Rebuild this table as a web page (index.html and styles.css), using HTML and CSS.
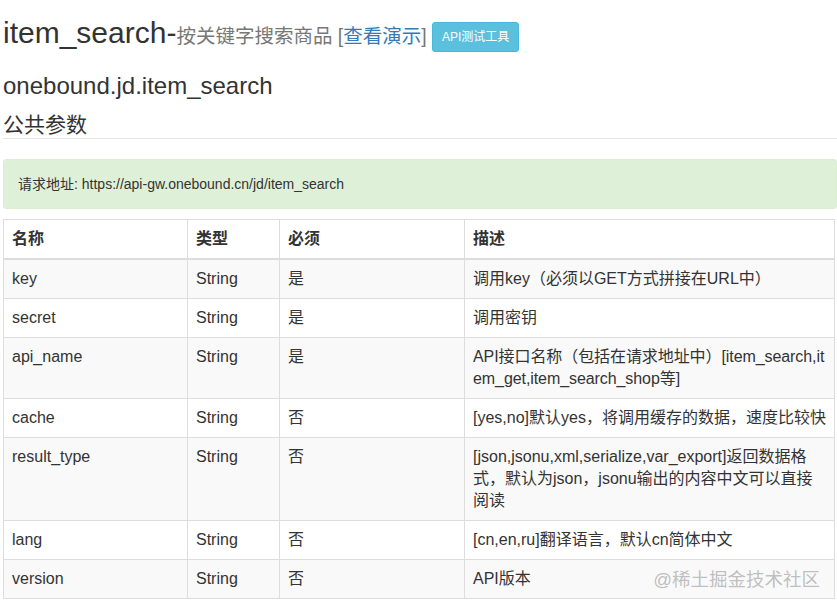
FILE: index.html
```html
<!DOCTYPE html>
<html lang="zh-CN">
<head>
<meta charset="utf-8">
<title>item_search</title>
<link rel="stylesheet" href="styles.css">
</head>
<body>
<div class="page">
  <h1 class="title">item_search-<small class="subtitle">按关键字搜索商品 [<a class="demo" href="#">查看演示</a>]</small> <a class="btn-info" href="#">API测试工具</a></h1>
  <h3 class="method">onebound.jd.item_search</h3>
  <h4 class="section">公共参数</h4>
  <div class="alert">请求地址: https://api-gw.onebound.cn/jd/item_search</div>
  <table class="params">
    <thead>
      <tr><th class="c1">名称</th><th class="c2">类型</th><th class="c3">必须</th><th class="c4">描述</th></tr>
    </thead>
    <tbody>
      <tr><td>key</td><td>String</td><td>是</td><td>调用key（必须以GET方式拼接在URL中）</td></tr>
      <tr><td>secret</td><td>String</td><td>是</td><td>调用密钥</td></tr>
      <tr><td>api_name</td><td>String</td><td>是</td><td class="tight">API接口名称（包括在请求地址中）[item_search,item_get,item_search_shop等]</td></tr>
      <tr><td>cache</td><td>String</td><td>否</td><td>[yes,no]默认yes，将调用缓存的数据，速度比较快</td></tr>
      <tr><td>result_type</td><td>String</td><td>否</td><td>[json,jsonu,xml,serialize,var_export]返回数据格式，默认为json，jsonu输出的内容中文可以直接阅读</td></tr>
      <tr><td>lang</td><td>String</td><td>否</td><td>[cn,en,ru]翻译语言，默认cn简体中文</td></tr>
      <tr><td>version</td><td>String</td><td>否</td><td>API版本</td></tr>
    </tbody>
  </table>
  <div class="watermark">@稀土掘金技术社区</div>
</div>
</body>
</html>
```
FILE: styles.css
```css
html, body {
  margin: 0;
  padding: 0;
  background: #fff;
}
body {
  font-family: "Liberation Sans", "Noto Sans CJK SC", sans-serif;
  color: #333;
  overflow: hidden;
}
.page {
  position: relative;
  width: 834px;
  padding-left: 3px;
}
.title {
  margin: 0;
  padding-top: 15px;
  font-size: 30px;
  line-height: 36px;
  font-weight: normal;
  white-space: nowrap;
}
.subtitle {
  font-size: 19.5px;
  color: #777;
}
.demo {
  color: #337ab7;
  text-decoration: none;
}
.btn-info {
  display: inline-block;
  vertical-align: 2px;
  margin-left: -3px;
  font-size: 12px;
  line-height: 18px;
  padding: 5px 9px;
  color: #fff;
  background: #5bc0de;
  border: 1px solid #46b8da;
  border-radius: 3px;
  text-decoration: none;
}
.method {
  margin: 18px 0 0;
  font-size: 24px;
  line-height: 28px;
  font-weight: normal;
}
.section {
  margin: 12px 0 0;
  font-size: 21px;
  line-height: 26px;
  font-weight: normal;
  padding-bottom: 0;
  border-bottom: 1px solid #e5e5e5;
}
.alert {
  margin-top: 20px;
  padding: 14px;
  font-size: 14px;
  line-height: 20px;
  background: #dff0d8;
  border: 1px solid #dcefd4;
  border-radius: 3px;
  color: #333;
}
.params {
  margin-top: 10px;
  width: 832px;
  border-collapse: collapse;
  table-layout: fixed;
  font-size: 16px;
  line-height: 22px;
}
.params th, .params td {
  border: 1px solid #ddd;
  padding: 8px;
  text-align: left;
  vertical-align: top;
  word-break: break-all;
}
.params th {
  font-weight: bold;
  border-bottom-width: 2px;
}
.params tbody tr:nth-child(odd) {
  background: #f9f9f9;
}
.params .tight {
  letter-spacing: -0.08px;
}
.c1 { width: 167px; }
.c2 { width: 75px; }
.c3 { width: 168px; }
.c4 { width: auto; }
.watermark {
  position: absolute;
  right: 17px;
  top: 567px;
  font-size: 18.5px;
  line-height: 26px;
  color: rgba(140, 140, 140, 0.55);
}
```
